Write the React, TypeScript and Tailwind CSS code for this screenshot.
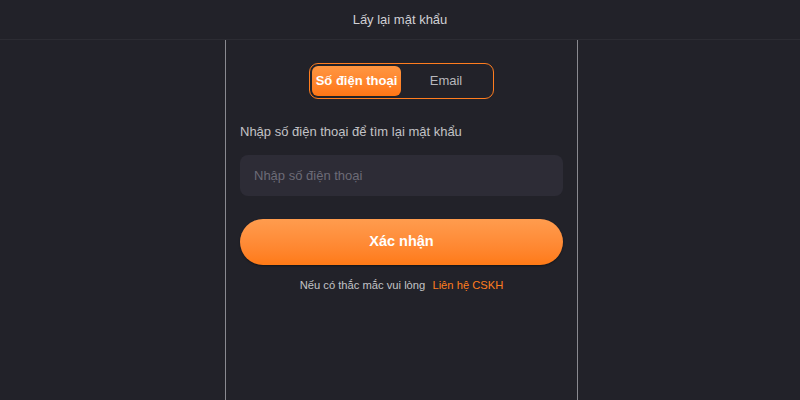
export default function App() {
  const font = { fontFamily: '"Liberation Sans", Arial, sans-serif' };
  return (
    <div className="w-[800px] h-[400px] bg-[#222229] flex flex-col overflow-hidden" style={font}>
      {/* Header */}
      <div className="h-10 flex items-center justify-center border-b border-[#2c2c33] shrink-0">
        <span className="text-[13px] text-[#d0d0d4]">Lấy lại mật khẩu</span>
      </div>

      {/* Panel */}
      <div className="w-[353px] ml-[225px] flex-1 border-x border-[#8a8a90] px-[14px] flex flex-col">
        {/* Tabs */}
        <div className="mt-[23px] self-center w-[185px] h-[36px] rounded-[9px] border border-[#ff7d1f] p-[2px] flex">
          <div className="w-[89px] h-full rounded-[6px] bg-gradient-to-b from-[#ff9640] to-[#ff7614] flex items-center justify-center text-white text-[13px] font-bold">
            Số điện thoại
          </div>
          <div className="flex-1 flex items-center justify-center text-[13px] text-[#b8b8bc]">Email</div>
        </div>

        {/* Label */}
        <div className="mt-[23px] text-[13px] text-[#c2c2c6]">Nhập số điện thoại để tìm lại mật khẩu</div>

        {/* Input */}
        <input
          className="mt-[13px] h-[41px] rounded-[8px] bg-[#2d2c36] px-[14px] text-[13px] text-white placeholder:text-[#6c6b76] outline-none"
          placeholder="Nhập số điện thoại"
        />

        {/* Button */}
        <button className="mt-[23px] h-[46px] rounded-full bg-gradient-to-b from-[#ff9c4e] to-[#ff7a15] text-white text-[14.5px] font-bold shadow-[0_1px_2px_rgba(0,0,0,0.4)]">
          Xác nhận
        </button>

        {/* Footer */}
        <div className="mt-[12px] text-center text-[11.2px] text-[#c2c2c6]">
          Nếu có thắc mắc vui lòng <span className="ml-1 text-[#ff7d1f]">Liên hệ CSKH</span>
        </div>
      </div>
    </div>
  );
}
